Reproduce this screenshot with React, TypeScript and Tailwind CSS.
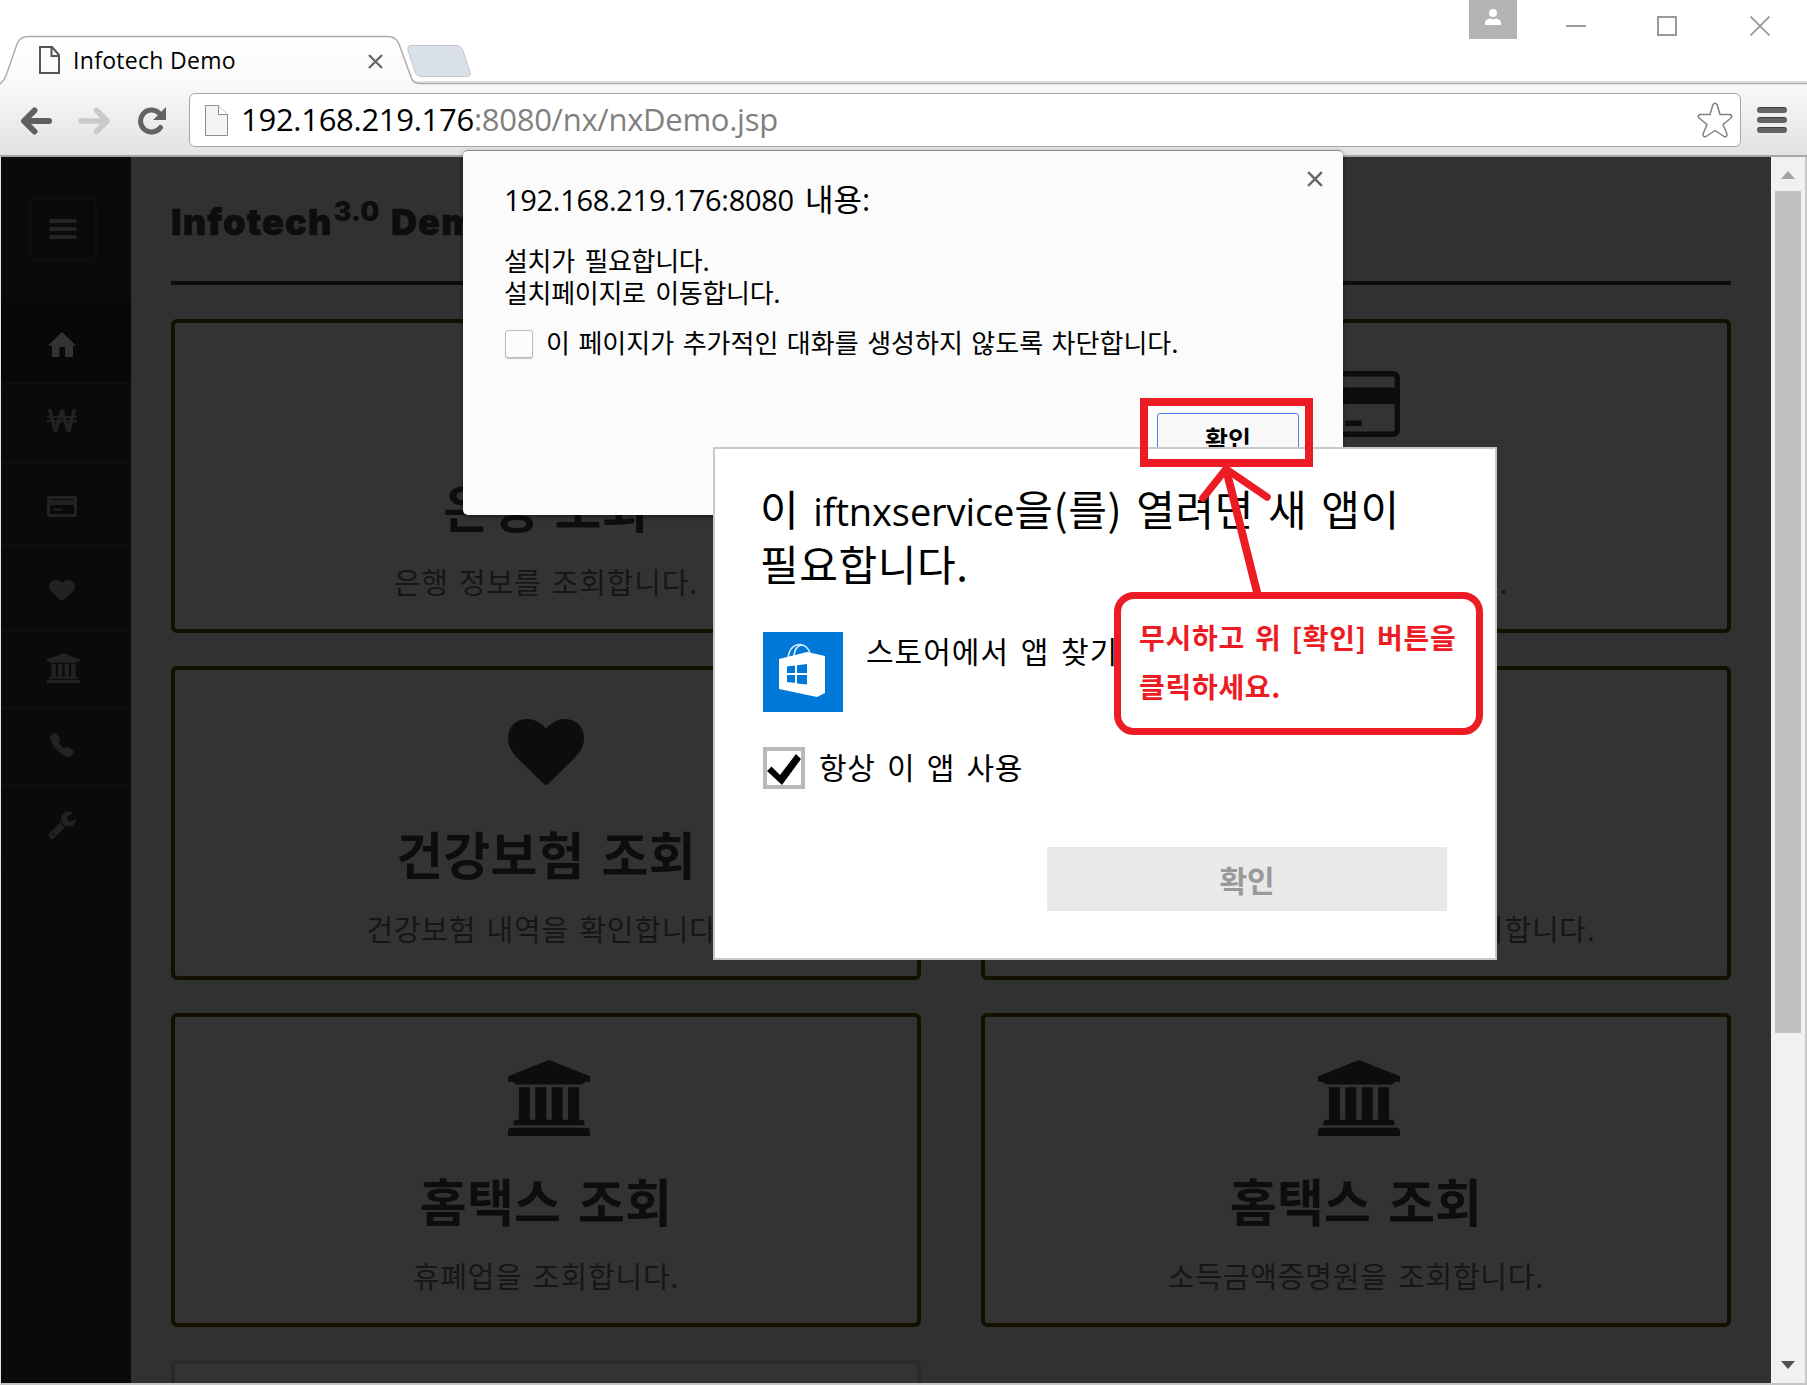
import React from "react";
import { BsTelephoneFill } from "react-icons/bs";

const kr = "font-['Noto_Sans_CJK_KR',sans-serif]";
const latin = "font-['Open_Sans','Noto_Sans_CJK_KR',sans-serif]";

type IconProps = { className?: string };

const Bank = ({ className }: IconProps) => (
  <svg viewBox="0 0 1920 1792" preserveAspectRatio="none" fill="currentColor" className={className}>
    <path d="M960 0l960 384v128h-128q0 26-20.5 45t-48.5 19h-1526q-28 0-48.5-19t-20.5-45h-128v-128zm-704 640h256v768h128v-768h256v768h128v-768h256v768h128v-768h256v768h59q28 0 48.5 19t20.5 45v64h-1664v-64q0-26 20.5-45t48.5-19h59v-768zm1595 960q28 0 48.5 19t20.5 45v128h-1920v-128q0-26 20.5-45t48.5-19h1782z" />
  </svg>
);

const Heart = ({ className }: IconProps) => (
  <svg viewBox="0 128 1792 1536" preserveAspectRatio="none" fill="currentColor" className={className}>
    <path d="M896 1664q-26 0-44-18l-624-602q-10-8-27.5-26t-55.5-65.5-68-97.5-53.5-121-23.5-138q0-220 127-344t351-124q62 0 126.5 21.5t120 58 95.5 68.5 76 68q36-36 76-68t95.5-68.5 120-58 126.5-21.5q224 0 351 124t127 344q0 221-229 450l-623 600q-18 18-44 18z" />
  </svg>
);

const CreditCard = ({ className }: IconProps) => (
  <svg viewBox="0 128 1920 1536" preserveAspectRatio="none" fill="currentColor" className={className}>
    <path d="M1760 128q66 0 113 47t47 113v1216q0 66-47 113t-113 47h-1600q-66 0-113-47t-47-113v-1216q0-66 47-113t113-47h1600zm-1600 128q-13 0-22.5 9.5t-9.5 22.5v224h1664v-224q0-13-9.5-22.5t-22.5-9.5h-1600zm1600 1280q13 0 22.5-9.5t9.5-22.5v-608h-1664v608q0 13 9.5 22.5t22.5 9.5h1600zm-1504-128v-128h256v128h-256zm384 0v-128h384v128h-384z" />
  </svg>
);

const Wrench = ({ className }: IconProps) => (
  <svg viewBox="64 128 1664 1664" fill="currentColor" className={className}>
    <path d="M448 1472q0-26-19-45t-45-19-45 19-19 45 19 45 45 19 45-19 19-45zm644-420l-682 682q-37 37-90 37-52 0-91-37l-106-108q-38-36-38-90 0-53 38-91l681-681q39 98 114.5 173.5t173.5 114.5zm634-435q0 39-23 106-47 134-164.5 217.5t-258.5 83.5q-185 0-316.5-131.5t-131.5-316.5 131.5-316.5 316.5-131.5q58 0 121.5 16.5t107.5 46.5q16 11 16 28t-16 28l-293 169v224l193 107q5-3 79-48.5t135.5-81 70.5-35.5q15 0 23.5 10t8.5 25z" />
  </svg>
);

const Home = ({ className }: IconProps) => (
  <svg viewBox="0 0 28 25" fill="currentColor" className={className}>
    <path d="M14 0L28 13.6H25V24q0 1-1 1H17V15H11.500V25H5q-1 0-1-1V13.600H0z" />
  </svg>
);

const Won = ({ className }: IconProps) => (
  <svg viewBox="0 0 30 24" fill="none" stroke="currentColor" className={className}>
    <path d="M2.500 0L8.500 23L15 1L21.500 23L27.500 0" strokeWidth="3.600" strokeLinejoin="bevel" />
    <path d="M0 8h30M0 12.300h30" strokeWidth="2" />
  </svg>
);

const SmallCard = ({ className }: IconProps) => (
  <svg viewBox="0 0 30 21" className={className}>
    <path fill="currentColor" fillRule="evenodd" d="M2 0H28Q30 0 30 2V19Q30 21 28 21H2Q0 21 0 19V2Q0 0 2 0ZM3 3V4H27V3ZM3 9V18H27V9ZM6 12.500H15V14.500H6Z" />
  </svg>
);

function TabStrip() {
  return (
    <div className="relative z-10 flex h-[84px] shrink-0 items-start bg-white">
      <svg className="absolute left-0 top-0 h-[85px] w-[1807px]" viewBox="0 0 1807 85" fill="none">
        <defs>
          <linearGradient id="tab" x1="0" y1="0" x2="0" y2="1">
            <stop offset="0" stopColor="#fff" />
            <stop offset="1" stopColor="#f9f9f9" />
          </linearGradient>
        </defs>
        <path d="M415 82H1807" stroke="#e2e2e2" strokeWidth="2" />
        <path d="M0 84Q4 81 7 73L17 44Q20 36.500 28 36.500H388Q396 36.500 399 44L411 77Q413 83.500 419 83.500H1807V86H0Z" fill="url(#tab)" />
        <path d="M0 84Q4 81 7 73L17 44Q20 36.500 28 36.500H388Q396 36.500 399 44L411 77Q413 83.500 419 83.500H1807" stroke="#adadad" strokeWidth="1.500" />
        <path d="M409 45.500H456Q461 45.500 463 51L470 72Q471 76.500 467 76.500H422Q417 76.500 415 72L408 50Q407 45.500 411 45.500Z" fill="#dae0e9" stroke="#c3c6ca" />
      </svg>
      <div className="relative flex h-[48px] w-[408px] items-center pl-[39px] mt-[36px]">
        <svg className="h-[28px] w-[21px]" viewBox="0 0 21 28" fill="none" stroke="#555" strokeWidth="2">
          <path d="M1 1H13L20 9V27H1ZM12.500 1V10H20" />
        </svg>
        <span className={`${latin} ml-[13px] w-[295px] whitespace-pre text-[23px] leading-[46px] tracking-[0.3px] text-black`}>Infotech Demo</span>
        <svg className="mt-[2px] h-[15px] w-[15px]" viewBox="0 0 15 15" stroke="#666" strokeWidth="2.300">
          <path d="M1 1L14 14M14 1L1 14" />
        </svg>
      </div>
      <div className="relative ml-auto flex items-start">
        <div className="flex h-[39px] w-[48px] justify-center bg-[#b3b3b3] pt-[9px]">
          <svg className="h-[16px] w-[16px]" viewBox="0 0 16 16" fill="#fff">
            <circle cx="8" cy="4" r="4" />
            <path d="M0 16V13Q1 10 5 9.500Q8 11 11 9.500Q15 10 16 13V16Z" />
          </svg>
        </div>
        <div className="ml-[49px] mt-[25px] h-[2px] w-[20px] bg-[#999]" />
        <div className="ml-[71px] mt-[16px] h-[20px] w-[20px] border-2 border-[#999]" />
        <svg className="ml-[73px] mr-[37px] mt-[16px] h-[20px] w-[20px]" viewBox="0 0 20 20" stroke="#999" strokeWidth="1.800">
          <path d="M.5 .5L19.500 19.500M19.500 .5L.5 19.500" />
        </svg>
      </div>
    </div>
  );
}

function Toolbar() {
  return (
    <div className="flex h-[73px] shrink-0 items-start border-b-2 border-[#a5a7a6] bg-gradient-to-b from-[#f9f9f9] to-[#e2e2e2] pt-[9px]">
      <svg className="ml-[20px] mt-[14px] h-[28px] w-[33px]" viewBox="0 0 33 28" fill="none" stroke="#5f5f5f" strokeWidth="6" strokeLinecap="round" strokeLinejoin="round">
        <path d="M29 14H6M14.500 3.500L4 14L14.500 24.500" />
      </svg>
      <svg className="ml-[25px] mt-[14px] h-[28px] w-[33px]" viewBox="0 0 33 28" fill="none" stroke="#c9c9c9" strokeWidth="5.500" strokeLinecap="round" strokeLinejoin="round">
        <path d="M3 14H26M18.500 3.500L29 14L18.500 24.500" />
      </svg>
      <svg className="ml-[27px] mt-[13px] h-[29px] w-[29px]" viewBox="0 0 29 29" fill="none">
        <path d="M22.500 21.500A11 11 0 1 1 21 7" stroke="#636363" strokeWidth="5" strokeLinecap="round" />
        <path d="M28 1V14H15Z" fill="#636363" />
      </svg>
      <div className="ml-[22px] flex h-[54px] w-[1552px] items-center rounded-[6px] border border-[#a6a6a6] bg-white pl-[15px] pr-[7px]">
        <svg className="h-[31px] w-[23px]" viewBox="0 0 23 31" stroke="#8e8e8e">
          <path d="M.5 .5H13.500L22.500 9.500V30.500H.5Z" fill="#f4f4f4" />
          <path d="M13.500 .5V9.500H22.500" fill="#fff" />
        </svg>
        <span className={`${latin} ml-[13px] mb-[2px] flex-1 whitespace-pre text-[31px] leading-[50px] tracking-[-0.28px] text-[#808080]`}>
          <span className="text-black">192.168.219.176</span>:8080/nx/nxDemo.jsp
        </span>
        <svg className="h-[36px] w-[36px]" viewBox="0 0 36 36" fill="none" stroke="#808080" strokeWidth="1.500" strokeLinejoin="round">
          <path d="M16 2.500Q18 0 20 2.500L23 12.500H33Q36 13.500 34 16L26 22.500L30 32Q30 35.500 27 34.500L18 28.500L9 34.500Q6 35.500 6 32L10 22.500L2 16Q0 13.500 3 12.500H13Z" />
        </svg>
      </div>
      <div className="ml-[16px] mt-[14px] flex flex-col gap-[4px]">
        <div className="h-[6px] w-[30px] rounded-full border-t border-[#404040] bg-[#636363]" />
        <div className="h-[6px] w-[30px] rounded-full border-t border-[#404040] bg-[#636363]" />
        <div className="h-[6px] w-[30px] rounded-full border-t border-[#404040] bg-[#636363]" />
      </div>
    </div>
  );
}

function Sidebar() {
  return (
    <nav className="flex w-[130px] shrink-0 flex-col bg-[#090a0c] text-[#222]">
      <div className="flex h-[143px] items-start pl-[28px] pt-[40px]">
        <div className="flex h-[64px] w-[68px] flex-col items-center justify-center gap-[4px] rounded-[6px] border-2 border-[#0e0f11]">
          <div className="h-[4px] w-[28px] rounded-full bg-[#242424]" />
          <div className="h-[4px] w-[28px] rounded-full bg-[#242424]" />
          <div className="h-[4px] w-[28px] rounded-full bg-[#242424]" />
        </div>
      </div>
      <div className="h-[85px] border-b-2 border-[#0e0f11] bg-[#07080a] pl-[47px] pt-[32px] text-[#333]"><Home className="h-[25px] w-[28px]" /></div>
      <div className="h-[78px] border-b-2 border-[#0e0f11] pl-[46px] pt-[24px]"><Won className="h-[24px] w-[30px]" /></div>
      <div className="h-[84px] border-b-2 border-[#0e0f11] pl-[46px] pt-[33px]"><SmallCard className="h-[21px] w-[30px]" /></div>
      <div className="h-[84px] border-b-2 border-[#0e0f11] pl-[48px] pt-[33px]"><Heart className="h-[21px] w-[26px]" /></div>
      <div className="h-[78px] border-b-2 border-[#0e0f11] pl-[46px] pt-[22px]"><Bank className="h-[30px] w-[33px]" /></div>
      <div className="h-[78px] border-b-2 border-[#0e0f11] pl-[49px] pt-[24px]"><BsTelephoneFill className="h-[24px] w-[24px]" /></div>
      <div className="h-[78px] border-b-2 border-[#0e0f11] pl-[47px] pt-[24px]"><Wrench className="h-[29px] w-[28px]" /></div>
    </nav>
  );
}

function Card({ icon, title, desc }: { icon: React.ReactNode; title: string; desc: string }) {
  return (
    <section className="flex h-[314px] flex-col items-center rounded-[6px] border-4 border-[#141000] bg-[#333] pt-[43px] text-[#0d0d0d]">
      <div className="flex h-[76px] items-start">{icon}</div>
      <h2 className="mt-[27px] h-[74px] whitespace-pre text-[51px] font-bold leading-[74px] tracking-[0.2px] [word-spacing:5px]">{title}</h2>
      <p className="mt-[16px] whitespace-pre text-[29px] leading-[44px] tracking-[0.8px] [word-spacing:3px] text-[#161616]">{desc}</p>
    </section>
  );
}

function Main() {
  const bank = <Bank className="ml-[6px] h-[76px] w-[82px]" />;
  const card = <CreditCard className="ml-[6px] mt-[5px] h-[66px] w-[82px]" />;
  const heart = <Heart className="mt-[6px] h-[66px] w-[76px]" />;
  return (
    <main className="flex-1 overflow-hidden bg-[#303231] pl-[40px] pr-[40px]">
      <h1 className="flex h-[128px] items-start whitespace-pre border-b-4 border-[#0c0d0c] pt-[41px] font-['Inter',sans-serif] text-[36px] font-black leading-[48px] tracking-[1.200px] text-[#0d0d0d] [-webkit-text-stroke:0.6px_#0d0d0d]">
        Infotech<span className="ml-[1px] mr-[3px] mt-[-10px] text-[27px] tracking-[0px] [-webkit-text-stroke:0px]">3.0</span> Demo
      </h1>
      <div className="mt-[34px] grid grid-cols-2 gap-x-[60px] gap-y-[33px]">
        <Card icon={bank} title="은행 조회" desc="은행 정보를 조회합니다." />
        <Card icon={card} title="카드 조회" desc="카드 정보를 조회합니다." />
        <Card icon={heart} title="건강보험 조회" desc="건강보험 내역을 확인합니다." />
        <Card icon={heart} title="국민연금" desc="국민연금 가입자 증명서를 조회합니다." />
        <Card icon={bank} title="홈택스 조회" desc="휴폐업을 조회합니다." />
        <Card icon={bank} title="홈택스 조회" desc="소득금액증명원을 조회합니다." />
        <div className="h-[314px] rounded-[6px] border-4 border-[#2a2a2a] bg-[#333]" />
      </div>
    </main>
  );
}

function Scrollbar() {
  return (
    <div className="flex w-[36px] shrink-0 flex-col items-center border-r-2 border-[#c8c8c8] bg-[#f1f1f1]">
      <div className="mt-[14px] h-0 w-0 border-x-[7px] border-b-[8px] border-x-transparent border-b-[#a3a3a3]" />
      <div className="mt-[12px] h-[842px] w-[26px] bg-[#c1c1c1]" />
      <div className="mb-[14px] mt-auto h-0 w-0 border-x-[7px] border-t-[8px] border-x-transparent border-t-[#505050]" />
    </div>
  );
}

function AlertDialog() {
  return (
    <div className="absolute left-[463px] top-[150px] z-20 flex h-[365px] w-[880px] flex-col rounded-[5px] border-t border-[#8c8c8c] bg-[#fbfbfb] pl-[41px] text-black shadow-[0_2px_5px_rgba(0,0,0,0.45)]">
      <div className="flex h-[73px]">
        <h3 className={`${latin} mt-[25px] w-[803px] whitespace-pre text-[29px] leading-[46px] tracking-[-0.3px] [word-spacing:4px]`}>
          192.168.219.176:8080 <span className="text-[31px] tracking-[0px]">내용:</span>
        </h3>
        <svg className="mt-[20px] h-[16px] w-[16px]" viewBox="0 0 14 14" stroke="#666" strokeWidth="2.100">
          <path d="M1 1L13 13M13 1L1 13" />
        </svg>
      </div>
      <p className="mt-[20px] whitespace-pre text-[26px] leading-[32px] tracking-[-0.3px] [word-spacing:4px]">{"설치가 필요합니다.\n설치페이지로 이동합니다."}</p>
      <div className="mt-[16px] flex items-center">
        <div className="ml-[1px] mt-[4px] h-[28px] w-[28px] rounded-[3px] border border-[#bcbcbc] bg-[#fcfcfc] shadow-[0_1px_1px_rgba(0,0,0,0.2)]" />
        <span className="ml-[13px] whitespace-pre text-[26px] leading-[36px] [word-spacing:2.700px]">이 페이지가 추가적인 대화를 생성하지 않도록 차단합니다.</span>
      </div>
      <div className="ml-[653px] mt-[53px] h-[50px] w-[142px] rounded-[3px] border border-[#4380ea] bg-[#f8f8f8] text-center text-[25px] font-bold leading-[48px]">확인</div>
    </div>
  );
}

function AppPicker() {
  return (
    <div className="absolute left-[713px] top-[447px] z-30 flex h-[513px] w-[784px] flex-col border-2 border-[#c8c8c8] bg-white pl-[48px] text-black">
      <h3 className="-ml-[3px] mt-[33px] h-[104px] whitespace-pre text-[42px] leading-[51px] tracking-[0.6px] [word-spacing:4px]">
        이 <span className="font-['Open_Sans',sans-serif] text-[38px] tracking-[-0.100px]">iftnxservice</span>을(를) 열려면 새 앱이{"\n"}필요합니다.
      </h3>
      <div className="mt-[46px] flex h-[80px]">
        <svg className="h-[80px] w-[80px]" viewBox="0 0 80 80">
          <path d="M0 0H80V80H0Z" fill="#0078d7" />
          <path d="M25 27Q26 13 37 12.500Q44 13 47 21M31 26Q31 14 39 13" stroke="#d6eafa" strokeWidth="1.600" fill="none" />
          <path d="M16 27L44 20L62 24V61L54 65L16 57Z" fill="#fff" />
          <path d="M24 34.500L32 33.500V41H24ZM34 33.200L44 32V41H34ZM24 43H32V51L24 50ZM34 43H44V52.500L34 51.500Z" fill="#0078d7" />
        </svg>
        <span className="ml-[23px] whitespace-pre text-[30px] leading-[37px] tracking-[1px] [word-spacing:4px]">스토어에서 앱 찾기</span>
      </div>
      <div className="mt-[35px] flex h-[42px] items-center">
        <div className="h-[42px] w-[42px] border-4 border-[#b8b8b8] bg-white">
          <svg className="h-[34px] w-[34px]" viewBox="0 0 34 34">
            <path d="M0 20L4.500 15.500L13 24L29 3L34 8L15 34Z" fill="#000" />
          </svg>
        </div>
        <span className="mb-[4px] ml-[14px] whitespace-pre text-[30px] leading-[42px] tracking-[0.7px] [word-spacing:4px]">항상 이 앱 사용</span>
      </div>
      <div className="ml-[284px] mt-[58px] h-[64px] w-[400px] bg-[#e9e9e9] text-center text-[30px] font-bold leading-[64px] text-[#999]">확인</div>
    </div>
  );
}

function Annotations() {
  return (
    <>
      <div className="absolute left-[1140px] top-[398px] z-40 h-[69px] w-[173px] border-8 border-[#ed1c24]" />
      <svg className="absolute left-[1190px] top-[460px] z-40 h-[140px] w-[90px]" viewBox="0 0 90 140" fill="none" stroke="#ed1c24" strokeWidth="7.500" strokeLinejoin="round">
        <path d="M13 38L36 9L77 37" strokeLinecap="round" />
        <path d="M36 9L68 136" strokeWidth="8" />
      </svg>
      <div className="absolute left-[1114px] top-[592px] z-40 h-[143px] w-[369px] whitespace-pre rounded-[20px] border-[7px] border-[#ed1c24] bg-white pl-[18px] pt-[14px] text-[28px] font-bold leading-[49px] tracking-[0.7px] text-[#ed1c24] [word-spacing:3px]">
        {"무시하고 위 [확인] 버튼을\n클릭하세요."}
      </div>
    </>
  );
}

export default function App() {
  return (
    <div className={`${kr} relative flex h-[1385px] w-[1807px] flex-col overflow-hidden bg-white`}>
      <TabStrip />
      <Toolbar />
      <div className="flex min-h-0 flex-1 border-b-2 border-l border-b-[#c4c4c4] border-l-[#dfe3e8]">
        <Sidebar />
        <Main />
        <Scrollbar />
      </div>
      <AlertDialog />
      <AppPicker />
      <Annotations />
    </div>
  );
}
